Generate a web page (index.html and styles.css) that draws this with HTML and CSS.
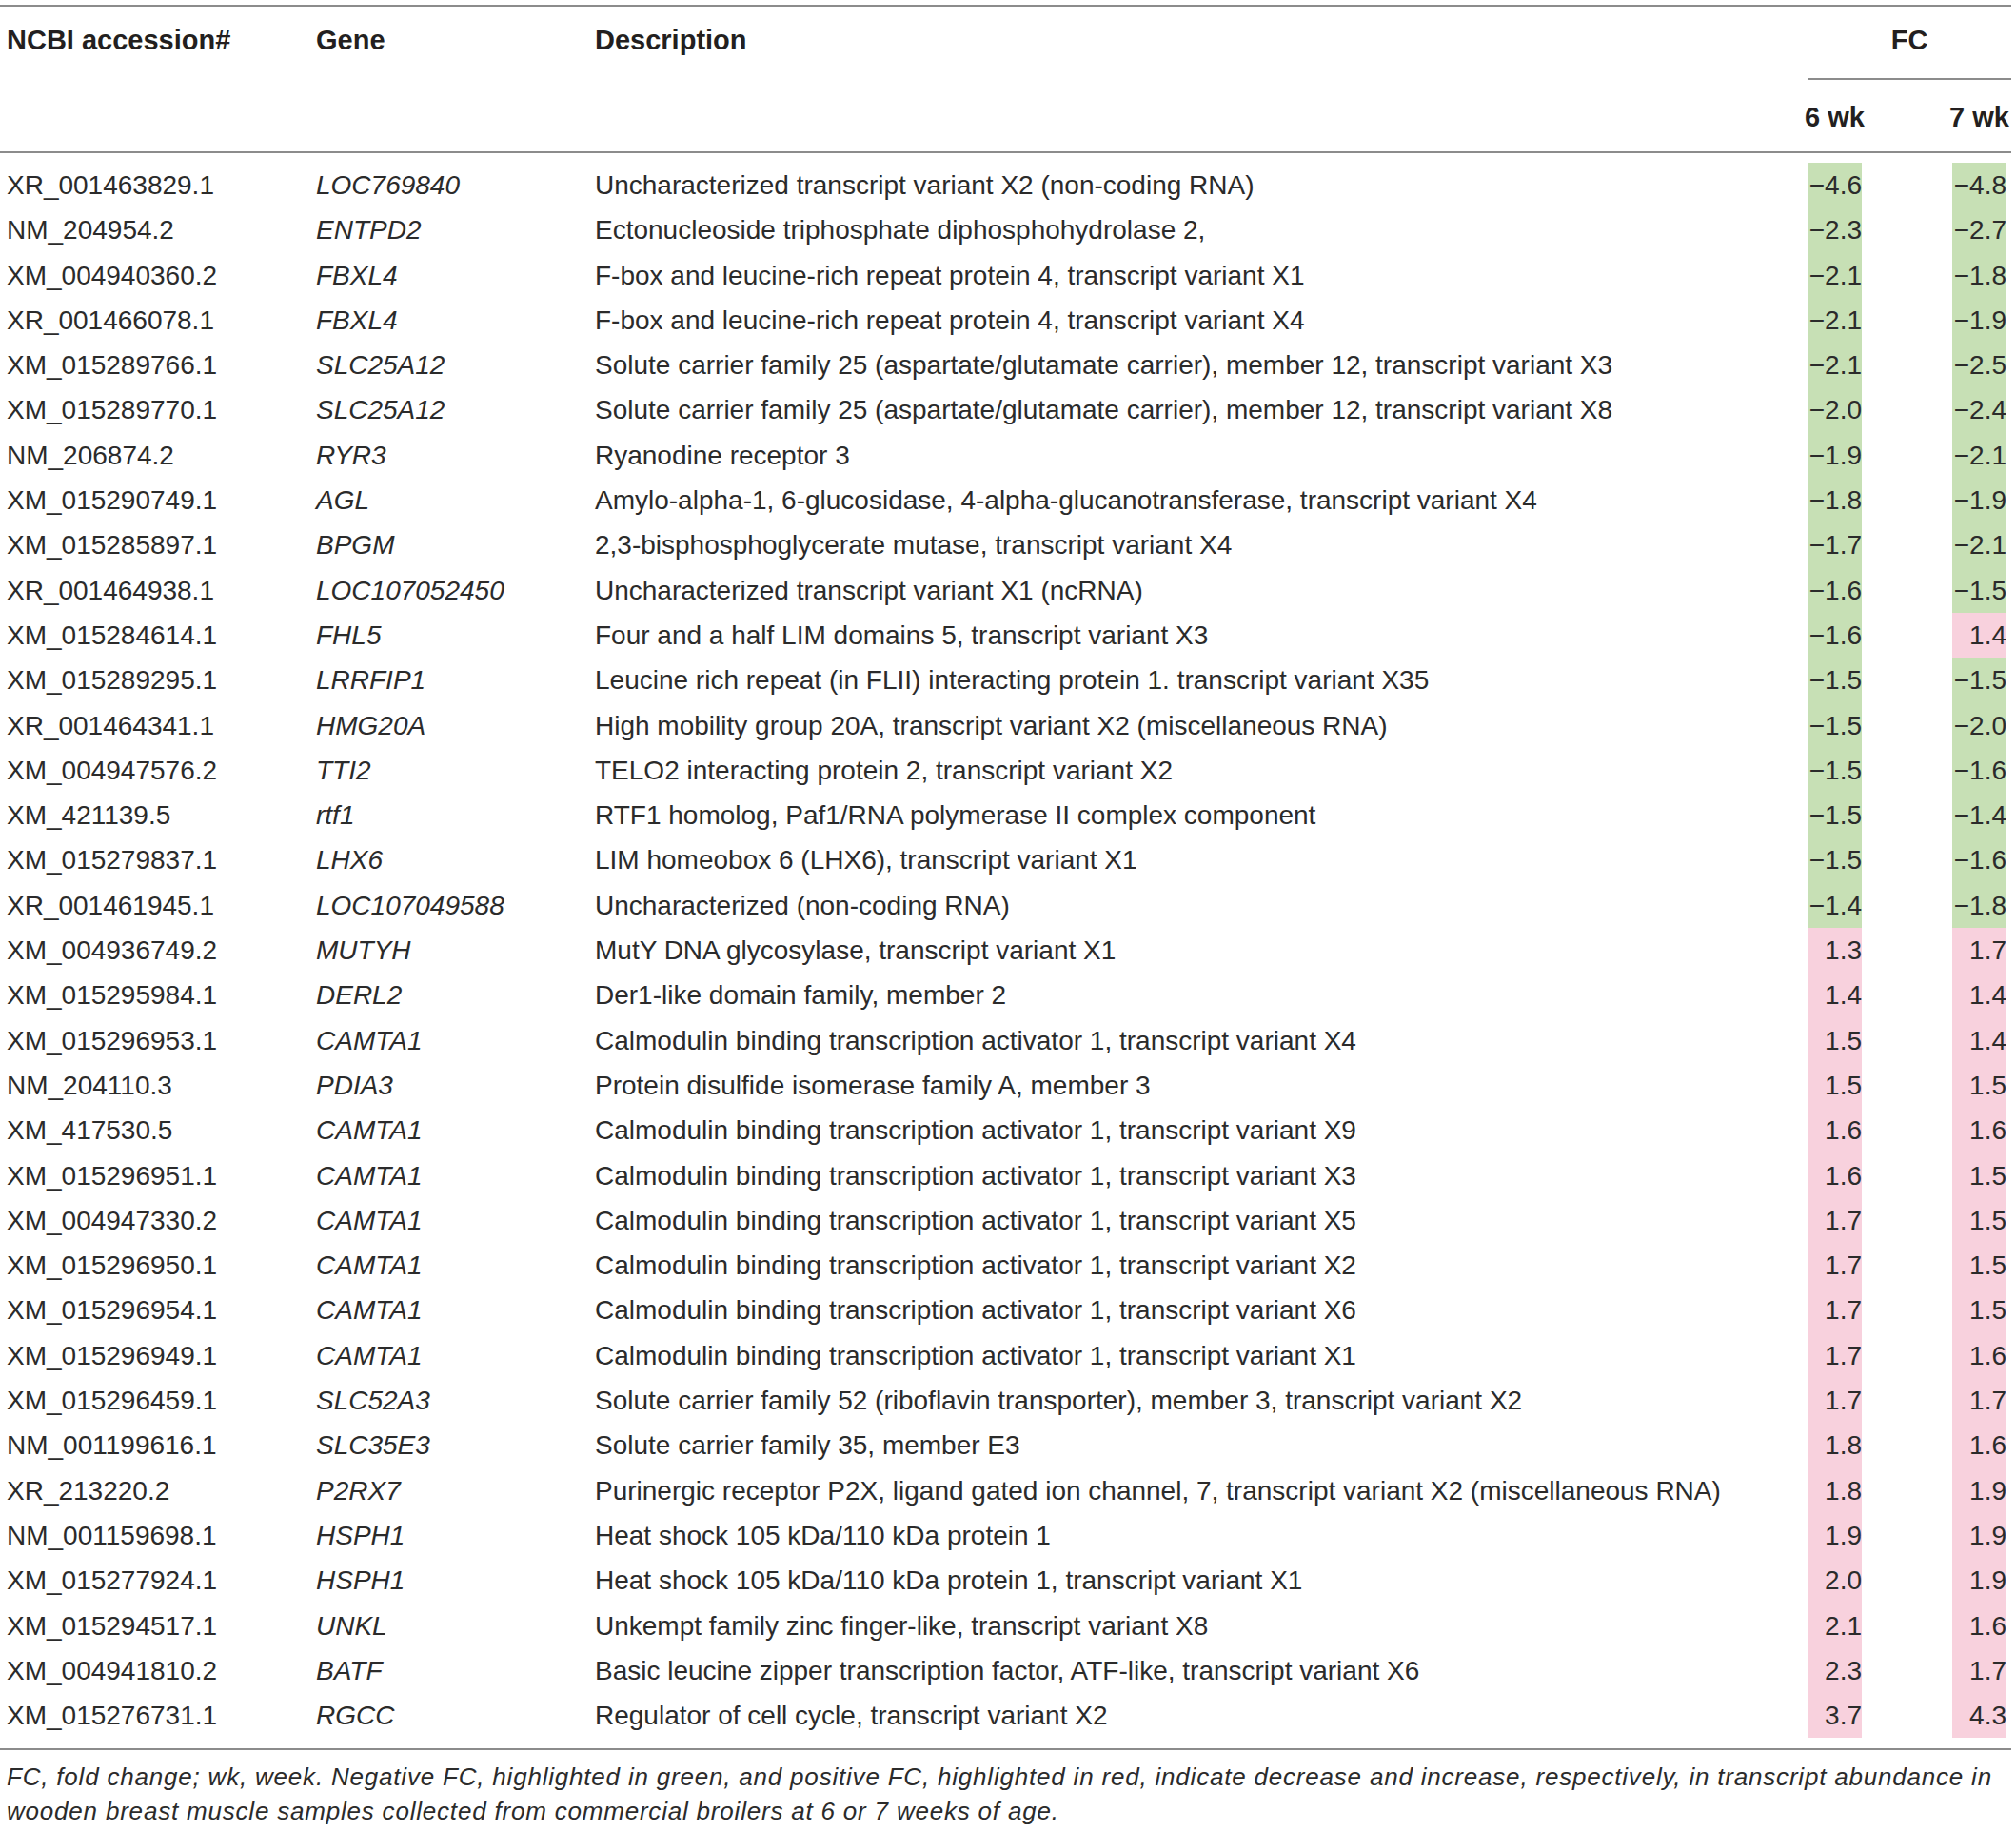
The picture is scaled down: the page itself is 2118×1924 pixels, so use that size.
FILE: index.html
```html
<!DOCTYPE html>
<html lang="en">
<head>
  <meta charset="UTF-8" />
  <title>Differentially abundant transcripts</title>
  <link rel="stylesheet" href="styles.css">
</head>
<body>
  <table class="fc-table">
    <colgroup>
      <col class="c-acc" />
      <col class="c-gene" />
      <col class="c-desc" />
      <col class="c-wk6" />
      <col class="c-wk7" />
    </colgroup>
    <thead>
      <tr>
        <th rowspan="2" class="top">NCBI accession#</th>
        <th rowspan="2" class="top">Gene</th>
        <th rowspan="2" class="top">Description</th>
        <th colspan="2" class="fc-head">FC</th>
      </tr>
      <tr>
        <th class="wk"><span class="wk-label">6 wk</span></th>
        <th class="wk wk7"><span class="wk-label">7 wk</span></th>
      </tr>
    </thead>
    <tbody>
      <tr class="first"><td>XR_001463829.1</td><td class="gene">LOC769840</td><td>Uncharacterized transcript variant X2 (non-coding RNA)</td><td class="val"><span class="v neg">−4.6</span></td><td class="val wk7"><span class="v neg">−4.8</span></td></tr>
      <tr><td>NM_204954.2</td><td class="gene">ENTPD2</td><td>Ectonucleoside triphosphate diphosphohydrolase 2,</td><td class="val"><span class="v neg">−2.3</span></td><td class="val wk7"><span class="v neg">−2.7</span></td></tr>
      <tr><td>XM_004940360.2</td><td class="gene">FBXL4</td><td>F-box and leucine-rich repeat protein 4, transcript variant X1</td><td class="val"><span class="v neg">−2.1</span></td><td class="val wk7"><span class="v neg">−1.8</span></td></tr>
      <tr><td>XR_001466078.1</td><td class="gene">FBXL4</td><td>F-box and leucine-rich repeat protein 4, transcript variant X4</td><td class="val"><span class="v neg">−2.1</span></td><td class="val wk7"><span class="v neg">−1.9</span></td></tr>
      <tr><td>XM_015289766.1</td><td class="gene">SLC25A12</td><td>Solute carrier family 25 (aspartate/glutamate carrier), member 12, transcript variant X3</td><td class="val"><span class="v neg">−2.1</span></td><td class="val wk7"><span class="v neg">−2.5</span></td></tr>
      <tr><td>XM_015289770.1</td><td class="gene">SLC25A12</td><td>Solute carrier family 25 (aspartate/glutamate carrier), member 12, transcript variant X8</td><td class="val"><span class="v neg">−2.0</span></td><td class="val wk7"><span class="v neg">−2.4</span></td></tr>
      <tr><td>NM_206874.2</td><td class="gene">RYR3</td><td>Ryanodine receptor 3</td><td class="val"><span class="v neg">−1.9</span></td><td class="val wk7"><span class="v neg">−2.1</span></td></tr>
      <tr><td>XM_015290749.1</td><td class="gene">AGL</td><td>Amylo-alpha-1, 6-glucosidase, 4-alpha-glucanotransferase, transcript variant X4</td><td class="val"><span class="v neg">−1.8</span></td><td class="val wk7"><span class="v neg">−1.9</span></td></tr>
      <tr><td>XM_015285897.1</td><td class="gene">BPGM</td><td>2,3-bisphosphoglycerate mutase, transcript variant X4</td><td class="val"><span class="v neg">−1.7</span></td><td class="val wk7"><span class="v neg">−2.1</span></td></tr>
      <tr><td>XR_001464938.1</td><td class="gene">LOC107052450</td><td>Uncharacterized transcript variant X1 (ncRNA)</td><td class="val"><span class="v neg">−1.6</span></td><td class="val wk7"><span class="v neg">−1.5</span></td></tr>
      <tr><td>XM_015284614.1</td><td class="gene">FHL5</td><td>Four and a half LIM domains 5, transcript variant X3</td><td class="val"><span class="v neg">−1.6</span></td><td class="val wk7"><span class="v pos">1.4</span></td></tr>
      <tr><td>XM_015289295.1</td><td class="gene">LRRFIP1</td><td>Leucine rich repeat (in FLII) interacting protein 1. transcript variant X35</td><td class="val"><span class="v neg">−1.5</span></td><td class="val wk7"><span class="v neg">−1.5</span></td></tr>
      <tr><td>XR_001464341.1</td><td class="gene">HMG20A</td><td>High mobility group 20A, transcript variant X2 (miscellaneous RNA)</td><td class="val"><span class="v neg">−1.5</span></td><td class="val wk7"><span class="v neg">−2.0</span></td></tr>
      <tr><td>XM_004947576.2</td><td class="gene">TTI2</td><td>TELO2 interacting protein 2, transcript variant X2</td><td class="val"><span class="v neg">−1.5</span></td><td class="val wk7"><span class="v neg">−1.6</span></td></tr>
      <tr><td>XM_421139.5</td><td class="gene">rtf1</td><td>RTF1 homolog, Paf1/RNA polymerase II complex component</td><td class="val"><span class="v neg">−1.5</span></td><td class="val wk7"><span class="v neg">−1.4</span></td></tr>
      <tr><td>XM_015279837.1</td><td class="gene">LHX6</td><td>LIM homeobox 6 (LHX6), transcript variant X1</td><td class="val"><span class="v neg">−1.5</span></td><td class="val wk7"><span class="v neg">−1.6</span></td></tr>
      <tr><td>XR_001461945.1</td><td class="gene">LOC107049588</td><td>Uncharacterized (non-coding RNA)</td><td class="val"><span class="v neg">−1.4</span></td><td class="val wk7"><span class="v neg">−1.8</span></td></tr>
      <tr><td>XM_004936749.2</td><td class="gene">MUTYH</td><td>MutY DNA glycosylase, transcript variant X1</td><td class="val"><span class="v pos">1.3</span></td><td class="val wk7"><span class="v pos">1.7</span></td></tr>
      <tr><td>XM_015295984.1</td><td class="gene">DERL2</td><td>Der1-like domain family, member 2</td><td class="val"><span class="v pos">1.4</span></td><td class="val wk7"><span class="v pos">1.4</span></td></tr>
      <tr><td>XM_015296953.1</td><td class="gene">CAMTA1</td><td>Calmodulin binding transcription activator 1, transcript variant X4</td><td class="val"><span class="v pos">1.5</span></td><td class="val wk7"><span class="v pos">1.4</span></td></tr>
      <tr><td>NM_204110.3</td><td class="gene">PDIA3</td><td>Protein disulfide isomerase family A, member 3</td><td class="val"><span class="v pos">1.5</span></td><td class="val wk7"><span class="v pos">1.5</span></td></tr>
      <tr><td>XM_417530.5</td><td class="gene">CAMTA1</td><td>Calmodulin binding transcription activator 1, transcript variant X9</td><td class="val"><span class="v pos">1.6</span></td><td class="val wk7"><span class="v pos">1.6</span></td></tr>
      <tr><td>XM_015296951.1</td><td class="gene">CAMTA1</td><td>Calmodulin binding transcription activator 1, transcript variant X3</td><td class="val"><span class="v pos">1.6</span></td><td class="val wk7"><span class="v pos">1.5</span></td></tr>
      <tr><td>XM_004947330.2</td><td class="gene">CAMTA1</td><td>Calmodulin binding transcription activator 1, transcript variant X5</td><td class="val"><span class="v pos">1.7</span></td><td class="val wk7"><span class="v pos">1.5</span></td></tr>
      <tr><td>XM_015296950.1</td><td class="gene">CAMTA1</td><td>Calmodulin binding transcription activator 1, transcript variant X2</td><td class="val"><span class="v pos">1.7</span></td><td class="val wk7"><span class="v pos">1.5</span></td></tr>
      <tr><td>XM_015296954.1</td><td class="gene">CAMTA1</td><td>Calmodulin binding transcription activator 1, transcript variant X6</td><td class="val"><span class="v pos">1.7</span></td><td class="val wk7"><span class="v pos">1.5</span></td></tr>
      <tr><td>XM_015296949.1</td><td class="gene">CAMTA1</td><td>Calmodulin binding transcription activator 1, transcript variant X1</td><td class="val"><span class="v pos">1.7</span></td><td class="val wk7"><span class="v pos">1.6</span></td></tr>
      <tr><td>XM_015296459.1</td><td class="gene">SLC52A3</td><td>Solute carrier family 52 (riboflavin transporter), member 3, transcript variant X2</td><td class="val"><span class="v pos">1.7</span></td><td class="val wk7"><span class="v pos">1.7</span></td></tr>
      <tr><td>NM_001199616.1</td><td class="gene">SLC35E3</td><td>Solute carrier family 35, member E3</td><td class="val"><span class="v pos">1.8</span></td><td class="val wk7"><span class="v pos">1.6</span></td></tr>
      <tr><td>XR_213220.2</td><td class="gene">P2RX7</td><td>Purinergic receptor P2X, ligand gated ion channel, 7, transcript variant X2 (miscellaneous RNA)</td><td class="val"><span class="v pos">1.8</span></td><td class="val wk7"><span class="v pos">1.9</span></td></tr>
      <tr><td>NM_001159698.1</td><td class="gene">HSPH1</td><td>Heat shock 105 kDa/110 kDa protein 1</td><td class="val"><span class="v pos">1.9</span></td><td class="val wk7"><span class="v pos">1.9</span></td></tr>
      <tr><td>XM_015277924.1</td><td class="gene">HSPH1</td><td>Heat shock 105 kDa/110 kDa protein 1, transcript variant X1</td><td class="val"><span class="v pos">2.0</span></td><td class="val wk7"><span class="v pos">1.9</span></td></tr>
      <tr><td>XM_015294517.1</td><td class="gene">UNKL</td><td>Unkempt family zinc finger-like, transcript variant X8</td><td class="val"><span class="v pos">2.1</span></td><td class="val wk7"><span class="v pos">1.6</span></td></tr>
      <tr><td>XM_004941810.2</td><td class="gene">BATF</td><td>Basic leucine zipper transcription factor, ATF-like, transcript variant X6</td><td class="val"><span class="v pos">2.3</span></td><td class="val wk7"><span class="v pos">1.7</span></td></tr>
      <tr class="last"><td>XM_015276731.1</td><td class="gene">RGCC</td><td>Regulator of cell cycle, transcript variant X2</td><td class="val"><span class="v pos">3.7</span></td><td class="val wk7"><span class="v pos">4.3</span></td></tr>
    </tbody>
  </table>

  <p class="footnote">FC, fold change; wk, week. Negative FC, highlighted in green, and positive FC, highlighted in red, indicate decrease and increase, respectively, in transcript abundance in wooden breast muscle samples collected from commercial broilers at 6 or 7 weeks of age.</p>
</body>
</html>
```

FILE: styles.css
```css
:root {
  --ink: #231f20;
  --text: #2b2b2b;
  --rule: #8c8c8c;
  --down: #c7e0b5;
  --up: #f8d1dd;
  --row-h: 47.29px;
}

body {
  margin: 0;
  padding-top: 5px;
  font-family: 'Liberation Sans', Arial, sans-serif;
  color: var(--ink);
  background: #fff;
}

.fc-table {
  width: 2113px;
  table-layout: fixed;
  border-collapse: separate;
  border-spacing: 0;
  border-top: 2px solid var(--rule);
  border-bottom: 2px solid var(--rule);
  font-size: 28px;
}

.c-acc { width: 325px; }
.c-gene { width: 293px; }
.c-desc { width: 1281px; }
.c-wk6 { width: 105px; }
.c-wk7 { width: 109px; }

/* Cabecera */
th {
  font-size: 29px;
  font-weight: bold;
  text-align: left;
  vertical-align: top;
  line-height: 31px;
  padding: 20px 0 0 7px;
  white-space: nowrap;
}

th.top {
  border-bottom: 2px solid var(--rule);
}

th.fc-head {
  text-align: center;
  padding: 20px 0 24px 0;
  border-bottom: 2px solid var(--rule);
}

th.wk {
  padding: 24px 0 20px 0;
  border-bottom: 2px solid var(--rule);
}

th.wk7 {
  padding-left: 47px;
}

.wk-label {
  display: flex;
  justify-content: center;
  width: 57px;
}

/* Filas */
td {
  padding: 0 0 0 7px;
  line-height: var(--row-h);
  white-space: nowrap;
  vertical-align: top;
  color: var(--text);
}

td.gene {
  font-style: italic;
}

td.val {
  padding-left: 0;
}

td.val.wk7 {
  padding-left: 47px;
}

tr.first td {
  padding-top: 10px;
}

tr.last td {
  padding-bottom: 11px;
}

.v {
  display: block;
  width: 57px;
  text-align: right;
}

.v.neg {
  background: var(--down);
}

.v.pos {
  background: var(--up);
}

.footnote {
  margin: 10px 0 0 0;
  padding-left: 7px;
  width: 2106px;
  font-size: 26px;
  letter-spacing: 0.8px;
  line-height: 36px;
  font-style: italic;
  color: var(--text);
}
```
